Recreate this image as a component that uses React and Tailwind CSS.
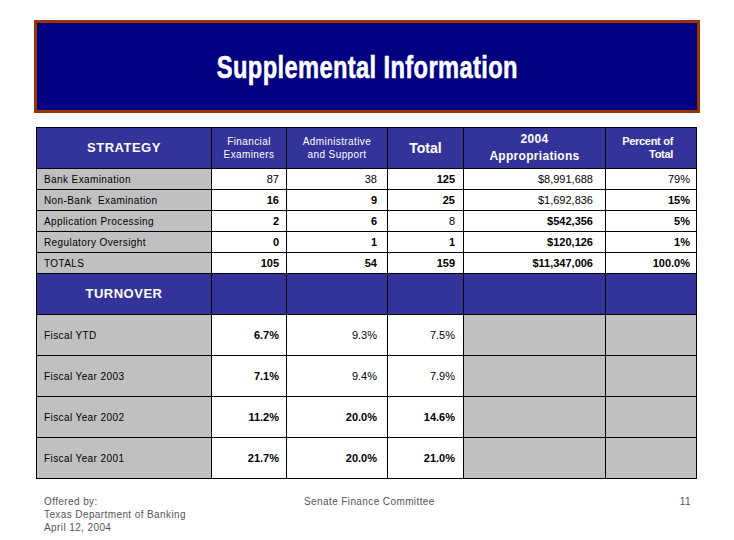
import React from "react";

const F = { fontFamily: '"Liberation Sans", Arial, sans-serif' };

const rows = [
  ["Bank Examination", ["87", false], ["38", false], ["125", true], ["$8,991,688", false], ["79%", false]],
  ["Non-Bank  Examination", ["16", true], ["9", true], ["25", true], ["$1,692,836", false], ["15%", true]],
  ["Application Processing", ["2", true], ["6", true], ["8", false], ["$542,356", true], ["5%", true]],
  ["Regulatory Oversight", ["0", true], ["1", true], ["1", true], ["$120,126", true], ["1%", true]],
  ["TOTALS", ["105", true], ["54", true], ["159", true], ["$11,347,006", true], ["100.0%", true]],
];

const turnover = [
  ["Fiscal YTD", ["6.7%", true], ["9.3%", false], ["7.5%", false]],
  ["Fiscal Year 2003", ["7.1%", true], ["9.4%", false], ["7.9%", false]],
  ["Fiscal Year 2002", ["11.2%", true], ["20.0%", true], ["14.6%", true]],
  ["Fiscal Year 2001", ["21.7%", true], ["20.0%", true], ["21.0%", true]],
];

const pads = ["pr-[7px]", "pr-[10px]", "pr-[8px]", "pr-[12px]", "pr-[6px]"];

function Num({ v, b, pad }) {
  return (
    <div className={`bg-white flex items-center justify-end text-[11px] text-black ${pad} ${b ? "font-bold" : ""}`}>
      {v}
    </div>
  );
}

export default function App() {
  return (
    <div className="w-[734px] h-[540px] bg-white relative overflow-hidden" style={F}>
      <div className="pt-[20px] pl-[34px]">
        <div className="w-[666px] h-[93px] border-[3px] border-[#993300] bg-[#000080] flex items-center justify-center">
          <span className="text-white font-bold text-[32px] leading-none scale-x-[0.74] inline-block whitespace-nowrap [-webkit-text-stroke:0.6px_white] tracking-[0.5px]">
            Supplemental Information
          </span>
        </div>
      </div>

      <div className="mt-[14px] ml-[36px] w-fit grid bg-black p-px gap-px grid-cols-[174px_74px_100px_75px_141px_90px] grid-rows-[40px_repeat(5,20px)_40px_repeat(4,40px)]">
        <div className="bg-[#333399] flex items-center justify-center text-white font-bold text-[13px] tracking-[0.5px]">STRATEGY</div>
        <div className="bg-[#333399] flex items-center justify-center text-center text-white text-[10px] leading-[13px] tracking-[0.4px]">Financial<br />Examiners</div>
        <div className="bg-[#333399] flex items-center justify-center text-center text-white text-[10px] leading-[13px] tracking-[0.4px]">Administrative<br />and Support</div>
        <div className="bg-[#333399] flex items-center justify-center text-white font-bold text-[14px]">Total</div>
        <div className="bg-[#333399] flex items-center justify-center text-center text-white font-bold text-[12px] leading-[17px] tracking-[0.3px]">2004<br />Appropriations</div>
        <div className="bg-[#333399] flex items-center justify-end text-right text-white font-bold text-[11px] leading-[13px] tracking-[-0.3px] pr-[23px]">Percent of<br />Total</div>

        {rows.map((r) => (
          <React.Fragment key={r[0]}>
            <div className="bg-[#c0c0c0] flex items-center pl-[7px] text-[10px] tracking-[0.4px] text-black whitespace-pre">{r[0]}</div>
            {r.slice(1).map((c, i) => (
              <Num key={i} v={c[0]} b={c[1]} pad={pads[i]} />
            ))}
          </React.Fragment>
        ))}

        <div className="bg-[#333399] flex items-center justify-center text-white font-bold text-[13px] tracking-[0.5px]">TURNOVER</div>
        <div className="bg-[#333399]" />
        <div className="bg-[#333399]" />
        <div className="bg-[#333399]" />
        <div className="bg-[#333399]" />
        <div className="bg-[#333399]" />

        {turnover.map((r) => (
          <React.Fragment key={r[0]}>
            <div className="bg-[#c0c0c0] flex items-center pl-[7px] text-[10px] tracking-[0.4px] text-black">{r[0]}</div>
            {r.slice(1).map((c, i) => (
              <Num key={i} v={c[0]} b={c[1]} pad={pads[i]} />
            ))}
            <div className="bg-[#c0c0c0]" />
            <div className="bg-[#c0c0c0]" />
          </React.Fragment>
        ))}
      </div>

      <div className="mt-[16px] ml-[44px] w-[647px] flex text-[10px] leading-[13px] tracking-[0.4px] text-[#555555]">
        <div className="w-[260px]">
          Offered by:<br />Texas Department of Banking<br />April 12, 2004
        </div>
        <div className="flex-1">Senate Finance Committee</div>
        <div>11</div>
      </div>
    </div>
  );
}
